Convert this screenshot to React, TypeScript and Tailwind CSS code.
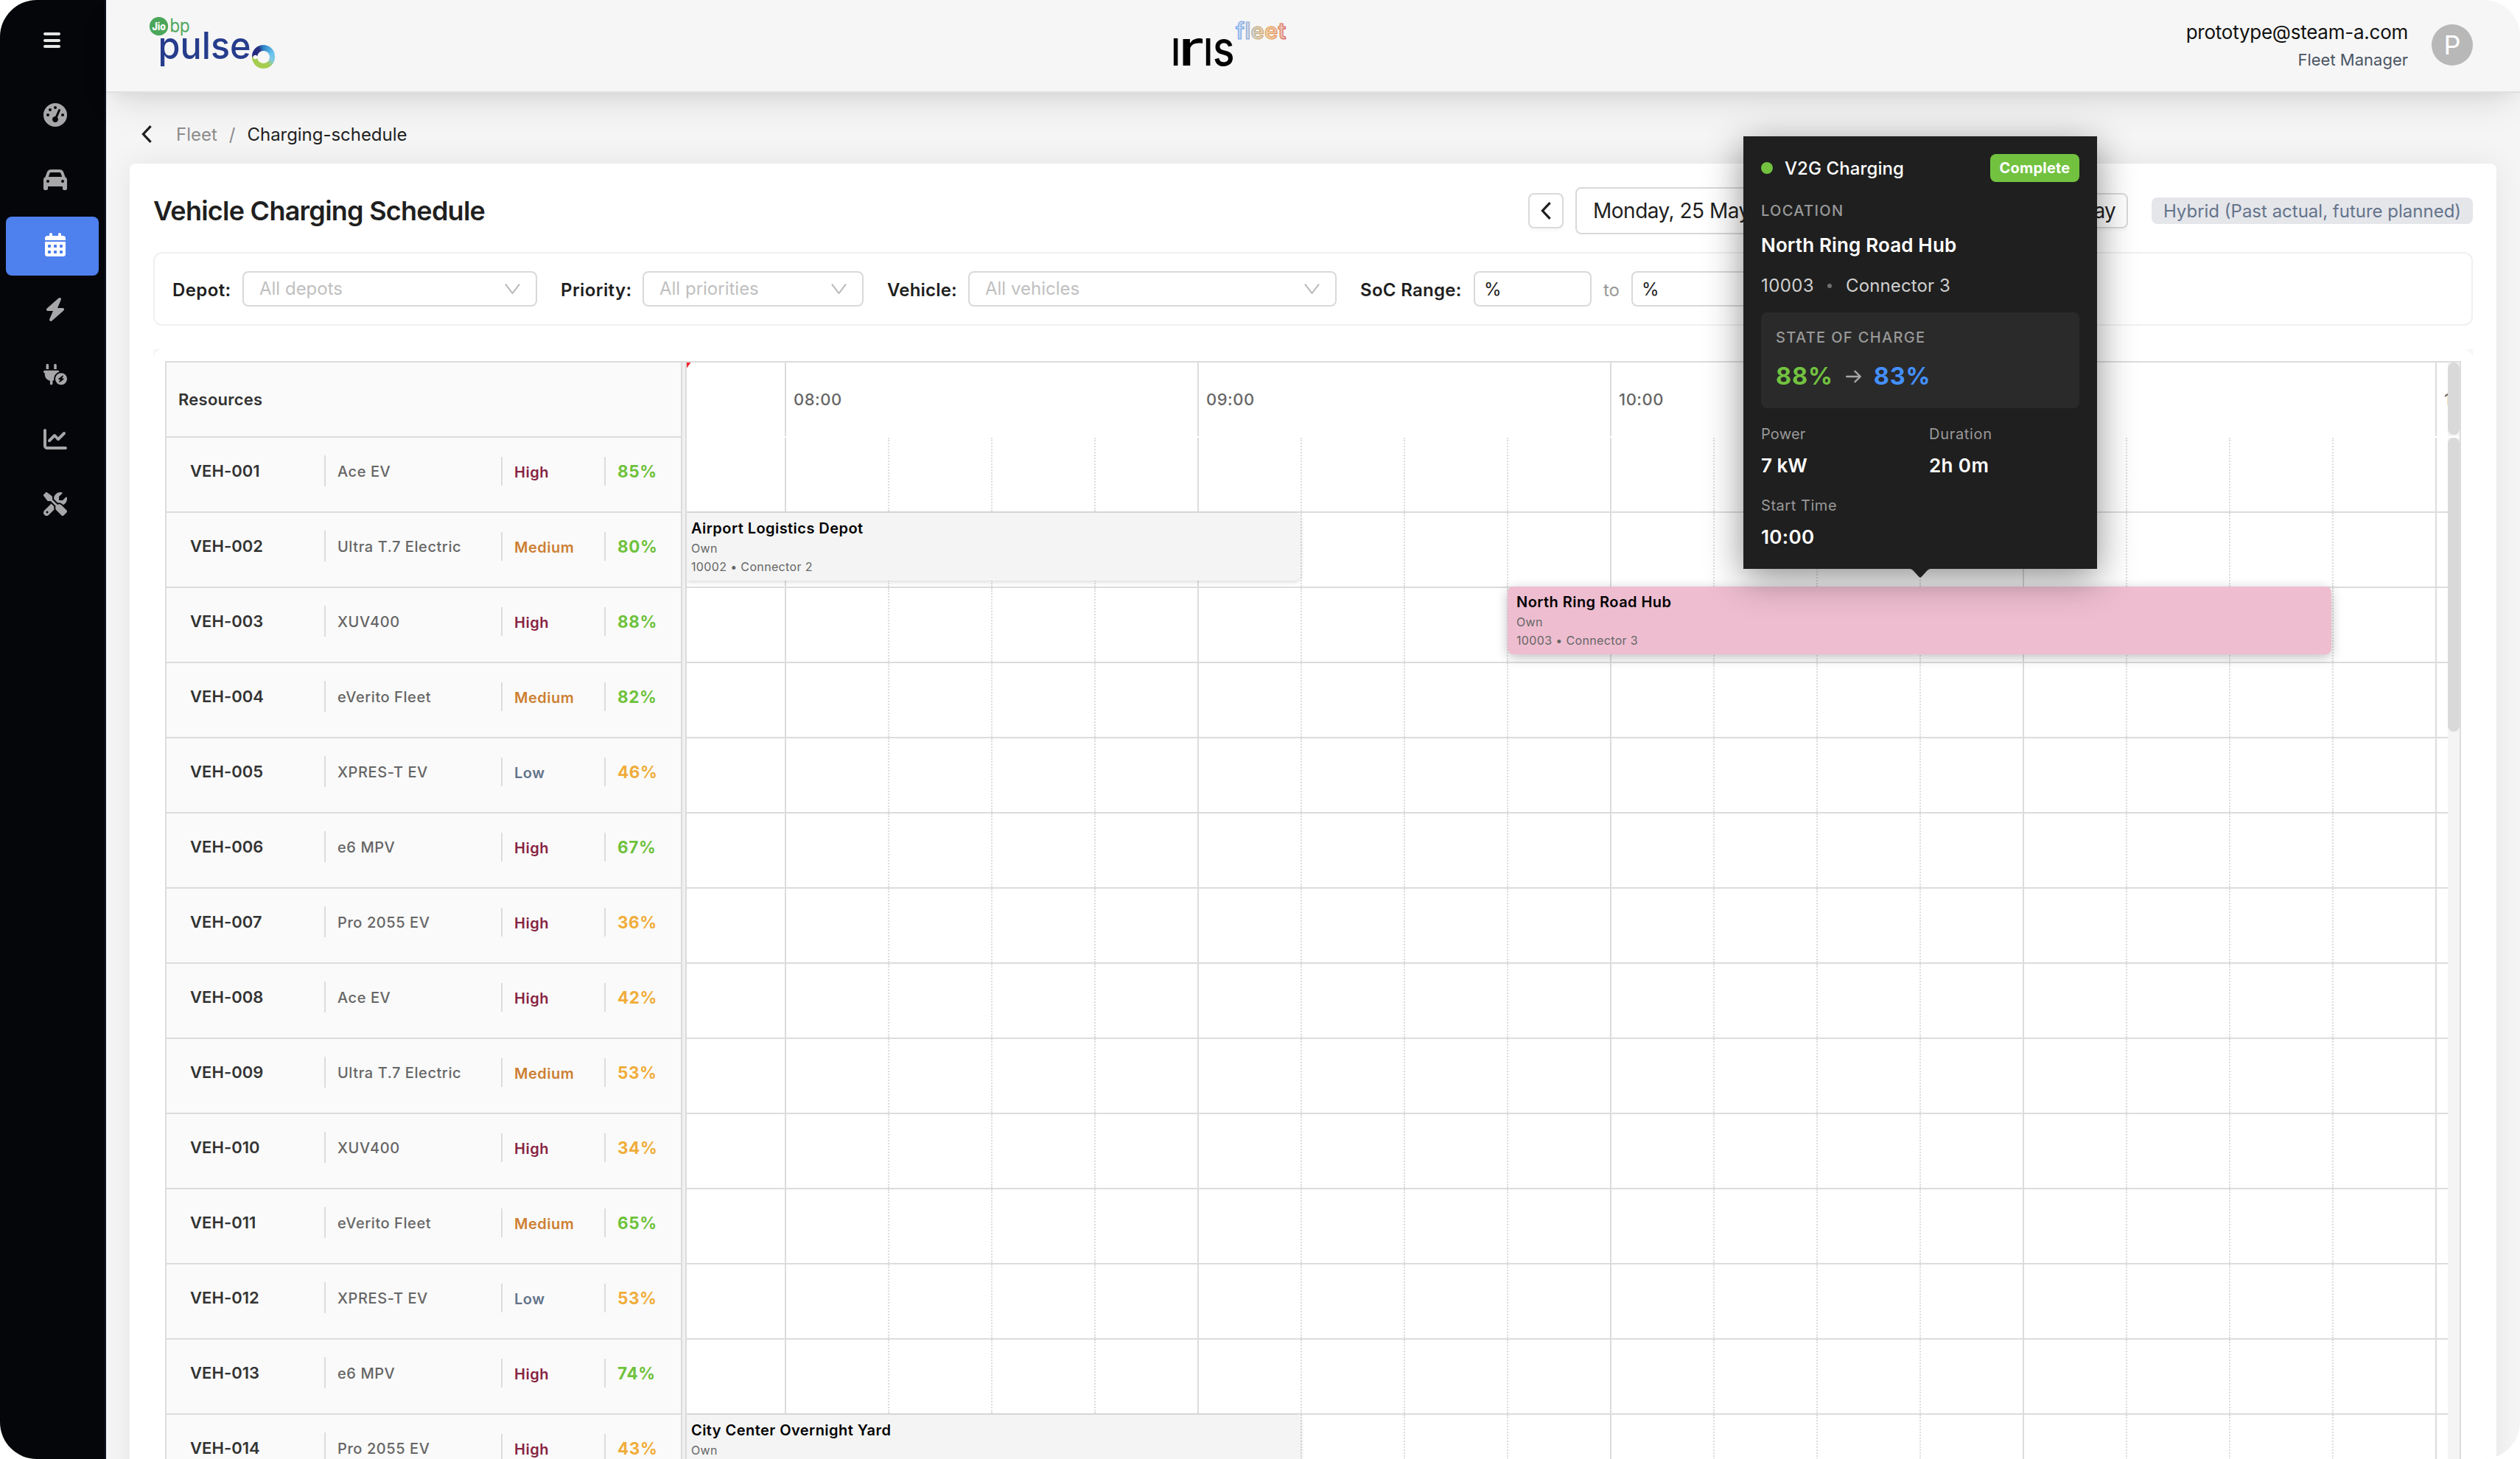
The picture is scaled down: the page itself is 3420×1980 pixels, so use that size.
import React from 'react';
import {
  FaGaugeHigh,
  FaCar,
  FaCalendarDays,
  FaBolt,
  FaPlugCircleBolt,
  FaChartLine,
  FaScrewdriverWrench,
} from 'react-icons/fa6';

interface Vehicle {
  id: string;
  model: string;
  priority: 'High' | 'Medium' | 'Low';
  soc: number;
}

interface ChargingEvent {
  vehicleId: string;
  title: string;
  owner: string;
  connector: string;
  className: string;
}

const vehicles: Vehicle[] = [
  { id: 'VEH-001', model: 'Ace EV', priority: 'High', soc: 85 },
  { id: 'VEH-002', model: 'Ultra T.7 Electric', priority: 'Medium', soc: 80 },
  { id: 'VEH-003', model: 'XUV400', priority: 'High', soc: 88 },
  { id: 'VEH-004', model: 'eVerito Fleet', priority: 'Medium', soc: 82 },
  { id: 'VEH-005', model: 'XPRES-T EV', priority: 'Low', soc: 46 },
  { id: 'VEH-006', model: 'e6 MPV', priority: 'High', soc: 67 },
  { id: 'VEH-007', model: 'Pro 2055 EV', priority: 'High', soc: 36 },
  { id: 'VEH-008', model: 'Ace EV', priority: 'High', soc: 42 },
  { id: 'VEH-009', model: 'Ultra T.7 Electric', priority: 'Medium', soc: 53 },
  { id: 'VEH-010', model: 'XUV400', priority: 'High', soc: 34 },
  { id: 'VEH-011', model: 'eVerito Fleet', priority: 'Medium', soc: 65 },
  { id: 'VEH-012', model: 'XPRES-T EV', priority: 'Low', soc: 53 },
  { id: 'VEH-013', model: 'e6 MPV', priority: 'High', soc: 74 },
  { id: 'VEH-014', model: 'Pro 2055 EV', priority: 'High', soc: 43 },
];

const events: ChargingEvent[] = [
  {
    vehicleId: 'VEH-002',
    title: 'Airport Logistics Depot',
    owner: 'Own',
    connector: '10002 • Connector 2',
    className: 'left-0 top-0 w-[833px] pl-[6px] rounded-r-lg bg-[#f4f4f4] shadow-[0_2px_6px_rgba(0,0,0,0.15)]',
  },
  {
    vehicleId: 'VEH-003',
    title: 'North Ring Road Hub',
    owner: 'Own',
    connector: '10003 • Connector 3',
    className: 'left-[1114px] -top-[2px] w-[1118px] pl-3 rounded-lg bg-[#eebdd0] shadow-[0_4px_16px_rgba(0,0,0,0.25)]',
  },
  {
    vehicleId: 'VEH-014',
    title: 'City Center Overnight Yard',
    owner: 'Own',
    connector: '10014 • Connector 2',
    className: 'left-0 top-0 w-[833px] pl-[6px] rounded-r-lg bg-[#f4f4f4] shadow-[0_2px_6px_rgba(0,0,0,0.15)]',
  },
];

const priorityColors: Record<Vehicle['priority'], string> = {
  High: 'text-[#872341]',
  Medium: 'text-[#cd7f32]',
  Low: 'text-[#64748b]',
};

const navItems = [
  { key: 'dashboard', icon: FaGaugeHigh },
  { key: 'vehicles', icon: FaCar },
  { key: 'schedule', icon: FaCalendarDays },
  { key: 'charging', icon: FaBolt },
  { key: 'chargers', icon: FaPlugCircleBolt },
  { key: 'reports', icon: FaChartLine },
  { key: 'tools', icon: FaScrewdriverWrench },
];

const hours = ['08:00', '09:00', '10:00', '11:00', '12:00'];
const slots = Array.from({ length: 17 }, (_, i) => i);

const ChevronLeft = () => (
  <svg width="14" height="24" viewBox="0 0 14 24" fill="none" stroke="#1f1f1f" strokeWidth="3.2" className="shrink-0">
    <path d="M12.6 1.2 2.4 12l10.2 10.8" />
  </svg>
);

const PulseLogo = () => (
  <svg width="176" height="124" viewBox="200 0 176 124">
    <circle cx="215.5" cy="35.7" r="12.6" fill="#4ba65a" />
    <text x="206.5" y="40.5" fontSize="14" fontWeight="800" fill="#fff" textLength="18.5" lengthAdjust="spacingAndGlyphs">Jio</text>
    <text x="230.5" y="43" fontSize="23.5" fontWeight="300" fill="#4ba65a" stroke="#4ba65a" strokeWidth="0.5" textLength="27" lengthAdjust="spacingAndGlyphs">bp</text>
    <text x="214.5" y="79.5" fontSize="51" fontWeight="500" fill="#263c8c" textLength="126" lengthAdjust="spacingAndGlyphs">pulse</text>
    <foreignObject x="342" y="61" width="32" height="32">
      <div className="flex h-[32px] w-[31px] items-center justify-center rounded-full bg-[conic-gradient(#2f86c8,#6cc5ef_70deg,#7fc9e0_110deg,#a5cd4f_150deg,#a5cd4f_265deg,#26267f_275deg,#26307f_330deg,#2f86c8)]">
        <div className="h-[17px] w-[17px] rounded-full bg-[#f6f6f6]" />
      </div>
    </foreignObject>
    <circle cx="346.5" cy="77.5" r="2.8" fill="#fff" />
  </svg>
);

const IrisLogo = () => (
  <svg width="156" height="124" viewBox="1592 0 156 124" className="overflow-visible">
    <defs>
      <linearGradient id="fleet" gradientUnits="userSpaceOnUse" x1="1677" y1="0" x2="1745" y2="0">
        <stop offset="0" stopColor="#5a9bf0" />
        <stop offset="0.22" stopColor="#7d9ccf" />
        <stop offset="0.4" stopColor="#b39a62" />
        <stop offset="0.65" stopColor="#e58a2c" />
        <stop offset="0.85" stopColor="#dd7038" />
        <stop offset="1" stopColor="#d0484f" />
      </linearGradient>
    </defs>
    <g fill="#000" fontWeight="500">
      <text x="1587.8" y="88.5" fontSize="50.5">I</text>
      <text x="1598" y="88.5" fontSize="66" textLength="35" lengthAdjust="spacingAndGlyphs">r</text>
      <text x="1631.8" y="88.5" fontSize="50.5">I</text>
      <text x="1645" y="88.5" fontSize="66" textLength="29.5" lengthAdjust="spacingAndGlyphs">s</text>
    </g>
    <text x="1676" y="53" fontSize="31" fontWeight="600" fill="url(#fleet)" fillOpacity="0.35" stroke="url(#fleet)" strokeWidth="1.1" strokeOpacity="0.85" textLength="68.5">fleet</text>
  </svg>
);

const Select: React.FC<{ placeholder: string; className: string }> = ({ placeholder, className }) => (
  <div className={`flex h-12 items-center justify-between rounded-lg border-2 border-[#d9d9d9] bg-white px-[21px] ${className}`}>
    <span className="text-[#bfbfbf]">{placeholder}</span>
    <svg width="21" height="14" viewBox="0 0 21 14" fill="none" stroke="#b8b8b8" strokeWidth="2">
      <path d="M1 .7 10.5 13 20 .7" />
    </svg>
  </div>
);

const Sidebar = () => (
  <aside className="flex w-36 shrink-0 flex-col border-r-2 border-[#0f1424] bg-[#040609]">
    <div className="flex h-[118px] flex-col gap-[4.5px] pl-[59px] pt-11">
      <div className="h-1 w-[23px] rounded-sm bg-[#e6e6e6]" />
      <div className="h-1 w-[23px] rounded-sm bg-[#e6e6e6]" />
      <div className="h-1 w-[23px] rounded-sm bg-[#e6e6e6]" />
    </div>
    <nav className="flex flex-col gap-2 px-2">
      {navItems.map(({ key, icon: Icon }) => (
        <div
          key={key}
          className={`flex h-20 items-center justify-center rounded-lg pb-1 pl-2 ${key === 'schedule'
            ? 'bg-[#4e80ee] text-white'
            : 'text-[#a7a7a9]'
            }`}
        >
          <Icon className="h-8 w-auto" />
        </div>
      ))}
    </nav>
  </aside>
);

const Header = () => (
  <header className="relative z-10 flex h-[126px] shrink-0 items-center justify-between border-b-2 border-[#e0e0e0] bg-[#f6f6f6] pl-14 pr-16 shadow-[0_20px_50px_-12px_rgba(0,0,0,0.13),0_8px_20px_-8px_rgba(0,0,0,0.06)]">
    <PulseLogo />
    <IrisLogo />
    <div className="flex items-center gap-8">
      <div className="text-right leading-[37px]">
        <div className="text-[26px] tracking-[-0.25px] text-[#111]">prototype@steam-a.com</div>
        <div className="pt-px text-[22px] text-[#4b5563]">Fleet Manager</div>
      </div>
      <div className="-mt-[2px] flex h-14 w-14 items-center justify-center rounded-full bg-[#b8b8b8] text-[36px] text-white">P</div>
    </div>
  </header>
);

const Filters = () => (
  <div className="mt-6 flex h-[100px] items-center rounded-xl border-2 border-[#f0f0f0] pl-6 text-[24px]">
    <span className="w-[95px] pt-[3px] font-semibold tracking-[0.4px] text-[#1f1f1f]">Depot:</span>
    <Select placeholder="All depots" className="w-[400px]" />
    <span className="ml-8 w-[111px] pt-[3px] font-semibold tracking-[0.4px] text-[#1f1f1f]">Priority:</span>
    <Select placeholder="All priorities" className="w-[300px]" />
    <span className="ml-8 w-[110px] pt-[3px] font-semibold tracking-[0.2px] text-[#1f1f1f]">Vehicle:</span>
    <Select placeholder="All vehicles" className="w-[500px]" />
    <span className="ml-8 w-[154px] pt-[3px] font-semibold tracking-[0.3px] text-[#1f1f1f]">SoC Range:</span>
    <div className="flex h-12 w-40 items-center rounded-lg border-2 border-[#d9d9d9] pl-3 pt-[2px] text-[#1f1f1f]">%</div>
    <span className="w-[54px] pt-[3px] text-center text-[#999]">to</span>
    <div className="flex h-12 w-40 items-center rounded-lg border-2 border-[#d9d9d9] pl-3 pt-[2px] text-[#1f1f1f]">%</div>
  </div>
);

const Resources = () => (
  <div className="w-[698px] shrink-0 bg-[#fafafa]">
    <div className="flex h-[102px] items-center border-b-2 border-[#dcdcdc] pl-4 text-[22px] font-semibold tracking-[0.24px] text-[#333]">
      Resources
    </div>
    {vehicles.map((v) => (
      <div key={v.id} className="h-[102px] border-b-2 border-[#dcdcdc] pl-8 pt-6">
        <div className="flex h-[42px] items-center">
          <div className="w-[182px] text-[22px] font-semibold tracking-[0.05px] text-[#333]">{v.id}</div>
          <div className="flex h-[42px] w-60 items-center border-l-2 border-[#dcdcdc] pl-4 pt-[2px] text-[20px] font-medium tracking-[0.57px] text-[#666]">
            {v.model}
          </div>
          <div className={`flex h-[39px] w-[140px] items-center border-l-2 border-[#dcdcdc] pl-4 pt-[3px] text-[20px] font-semibold tracking-[0.5px] ${priorityColors[v.priority]}`}>
            {v.priority}
          </div>
          <div className={`flex h-[39px] items-center border-l-2 border-[#dcdcdc] pl-4 pt-px text-[22.5px] font-bold tracking-[0.6px] ${v.soc > 60 ? 'text-[#6fc23c]' : 'text-[#f0ad3a]'}`}>
            {v.soc}%
          </div>
        </div>
      </div>
    ))}
  </div>
);

const EventCard: React.FC<{ event: ChargingEvent }> = ({ event }) => (
  <div className={`absolute z-[1] h-[92px] pt-[6px] text-[16px] leading-[25px] tracking-[0.35px] text-[#666] ${event.className}`}>
    <div className="text-[20px] font-semibold leading-[30px] tracking-[0.45px] text-black">{event.title}</div>
    <div>{event.owner}</div>
    <div>{event.connector}</div>
  </div>
);

const Timeline = () => (
  <div className="min-w-0 flex-1 overflow-hidden">
    <div className="relative flex h-[102px] pb-[2px]">
      {/* now indicator, mostly scrolled out of view */}
      <svg width="6" height="8" viewBox="0 0 6 8" className="absolute left-0 top-0">
        <path d="M0 0h5.5L0 7.5z" fill="#f5222d" />
      </svg>
      <div className="w-[133px] shrink-0" />
      {hours.map((h) => (
        <div key={h} className="flex w-[560px] shrink-0 items-center border-l-2 border-[#dcdcdc] pl-[10px] text-[22px] font-medium tracking-[0.5px] text-[#666]">
          {h}
        </div>
      ))}
    </div>
    {vehicles.map((v) => (
      <div key={v.id} className="relative flex h-[102px] border-b-2 border-[#dcdcdc]">
        <div className="w-[133px] shrink-0" />
        {slots.map((s) => (
          <div
            key={s}
            className={`w-[140px] shrink-0 border-l-2 border-[#dcdcdc] ${s % 4 === 0 ? 'border-solid' : 'border-dotted'}`}
          />
        ))}
        {events.filter((e) => e.vehicleId === v.id).map((e) => (
          <EventCard key={e.title} event={e} />
        ))}
      </div>
    ))}
  </div>
);

const ChargingTooltip = () => (
  <div className="absolute left-[2366px] top-[185px] z-20 h-[587px] w-[480px] bg-[#1f1f1f] p-6 text-white shadow-[0_12px_48px_rgba(0,0,0,0.45)]">
    <div className="flex h-[38px] items-center justify-between">
      <div className="flex items-center">
        <div className="h-4 w-4 rounded-full bg-[#72c240]" />
        <span className="ml-4 pt-[2px] text-[24px] font-medium tracking-[0.1px]">V2G Charging</span>
      </div>
      <span className="flex h-[38px] w-[121px] items-center justify-center rounded-lg bg-[#72c240] text-[20px] font-bold tracking-[0.2px]">Complete</span>
    </div>
    <div className="mt-[23px] text-[20px] font-medium leading-8 tracking-[1.34px] text-[#999]">LOCATION</div>
    <div className="mt-[11px] text-[26px] font-semibold leading-10 tracking-[0.15px]">North Ring Road Hub</div>
    <div className="mt-[17px] flex items-center text-[24px] leading-9 text-[#d0d0d0]">
      <span className="tracking-[0.4px]">10003</span>
      <span className="ml-[18px] mr-[19px] h-[6px] w-[6px] rounded-full bg-[#707070]" />
      <span className="tracking-[0.12px]">Connector 3</span>
    </div>
    <div className="mt-[18px] h-[130px] rounded-lg bg-[#2a2a2a] px-5 pt-[18px]">
      <div className="text-[20px] font-medium leading-8 tracking-[1.34px] text-[#999]">STATE OF CHARGE</div>
      <div className="mt-[17px] flex items-center text-[32.5px] font-bold leading-10 tracking-[0.8px]">
        <span className="text-[#72c240]">88%</span>
        <svg width="21" height="18" viewBox="0 0 21 18" fill="none" stroke="#a6a6a6" strokeWidth="2.4" strokeLinecap="round" strokeLinejoin="round" className="ml-[17px] mr-[17px]">
          <path d="M1.2 9h18M12.5 1.8 19.8 9l-7.3 7.2" />
        </svg>
        <span className="text-[#4490ff]">83%</span>
      </div>
    </div>
    <div className="mt-[19px] grid grid-cols-[228px_1fr] gap-y-[18px] text-[26px] font-semibold leading-10">
      <div>
        <div className="mb-[7px] text-[20px] font-normal leading-8 tracking-[0.2px] text-[#999]">Power</div>
        7 kW
      </div>
      <div>
        <div className="mb-[7px] text-[20px] font-normal leading-8 tracking-[0.7px] text-[#999]">Duration</div>
        <span className="tracking-[0.4px]">2h 0m</span>
      </div>
      <div>
        <div className="mb-[7px] text-[20px] font-normal leading-8 tracking-[0.55px] text-[#999]">Start Time</div>
        <span className="tracking-[0.35px]">10:00</span>
      </div>
    </div>
    <svg width="28" height="12" viewBox="0 0 28 12" className="absolute left-[226px] top-[587px]">
      <path d="M0 0c2 .4 3 1 4.500 2.300L12 10.600c1.200 1.200 2.800 1.200 4 0L23.500 2.300C25 1 26 .4 28 0z" fill="#1f1f1f" />
    </svg>
  </div>
);

const App: React.FC = () => {
  return (
    <div className="relative flex h-[1980px] w-[3420px] overflow-hidden rounded-[50px] bg-[#f5f5f5] font-['Inter',sans-serif]">
      <Sidebar />
      <div className="flex min-w-0 flex-1 flex-col">
        <Header />
        <div className="flex h-24 shrink-0 items-center gap-4 pl-12 pt-4 text-[24px] text-[#8c8c8c]">
          <ChevronLeft />
          <span className="ml-[17px] pt-px">Fleet</span>
          <span className="pt-px">/</span>
          <span className="pt-px tracking-[-0.04px] text-[#1f1f1f]">Charging-schedule</span>
        </div>

        <main className="mx-8 h-[1900px] shrink-0 rounded-t-lg bg-white px-8 pt-8 shadow-[0_0_40px_rgba(0,0,0,0.07)]">
          <div className="flex h-16 items-center justify-between">
            <h1 className="text-[36px] font-semibold tracking-[-0.75px] text-[#1f1f1f]">Vehicle Charging Schedule</h1>
            <div className="flex items-center gap-4 text-[28px] text-[#1f1f1f]">
              <button className="flex h-12 w-12 items-center justify-center rounded-lg border-2 border-[#d9d9d9] shadow-[0_4px_0_rgba(0,0,0,0.02)]">
                <ChevronLeft />
              </button>
              <div className="flex h-16 w-[564px] items-center rounded-lg border-2 border-[#d9d9d9] pl-[22px] tracking-[-0.5px]">
                Monday, 25 May 2026
              </div>
              <button className="flex h-12 w-12 items-center justify-center rounded-lg border-2 border-[#d9d9d9] shadow-[0_4px_0_rgba(0,0,0,0.02)]">
                <span className="rotate-180"><ChevronLeft /></span>
              </button>
              <button className="flex h-12 w-[106px] items-center justify-end rounded-lg border-2 border-[#d9d9d9] pr-[15px] tracking-[-0.8px] shadow-[0_4px_0_rgba(0,0,0,0.02)]">
                Today
              </button>
              <span className="ml-4 flex h-9 w-[436px] items-center justify-center rounded-lg bg-[#e5e6ea] pt-[2px] text-[24px] text-[#64748b]">
                Hybrid (Past actual, future planned)
              </span>
            </div>
          </div>

          <Filters />

          {/* Schedule grid */}
          <div className="mt-8 bg-[#f5f5f5]">
            <div className="rounded-t-[13px] bg-white p-4">
              <div className="flex border-2 border-[#dcdcdc]">
                <Resources />
                <div className="w-2 shrink-0 border-x-2 border-[#dcdcdc] bg-[#f0f0f0]" />
                <Timeline />
                <div className="flex w-4 shrink-0 flex-col">
                  <div className="h-[100px] bg-[#f4f4f4]">
                    <div className="h-[98px] rounded-full bg-[#d9d9d9]" />
                  </div>
                  <div className="mt-[2px] flex-1 bg-[#f4f4f4]">
                    <div className="h-[399px] rounded-full bg-[#d9d9d9]" />
                  </div>
                </div>
              </div>
            </div>
          </div>
        </main>
      </div>

      <ChargingTooltip />
    </div>
  );
};

export default App;
